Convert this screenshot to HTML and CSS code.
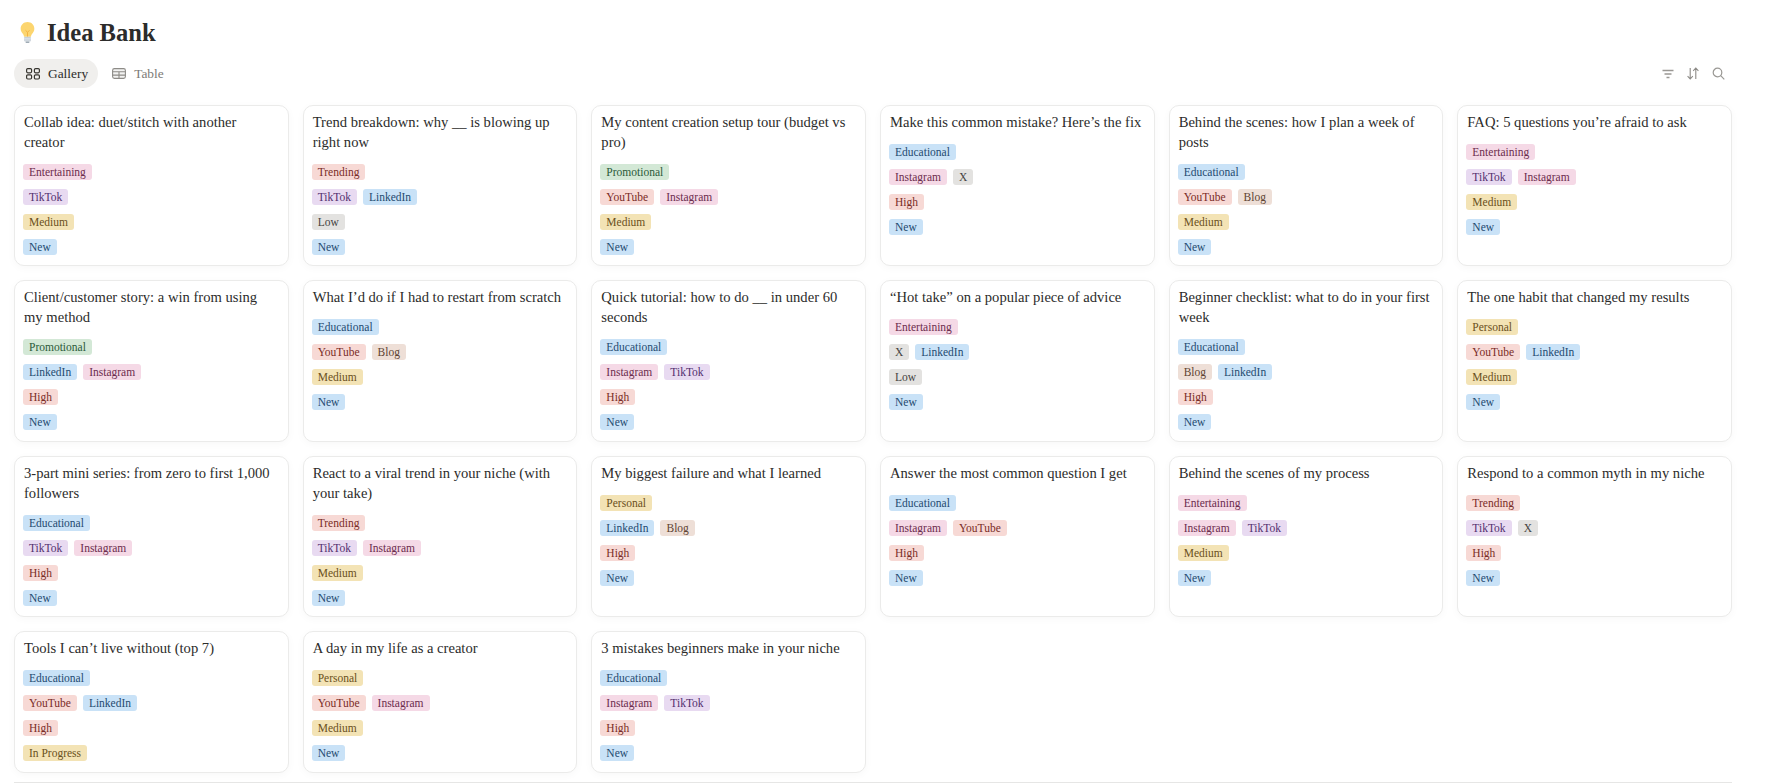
FILE: index.html
```html
<!DOCTYPE html>
<html lang="en">
<head>
  <meta charset="UTF-8">
  <meta name="viewport" content="width=device-width, initial-scale=1.0">
  <title>Idea Bank</title>
  <link rel="stylesheet" href="styles.css">
</head>
<body>
  <h1 class="page-title">
    <svg class="bulb" width="17" height="21" viewBox="3.500 1.500 15 21.500">
      <path d="M11 1.500c-4 0-7 3-7 6.800 0 2.600 1.300 4 2.400 5.500.7 1 .9 1.700 1 2.700h7.200c.1-1 .3-1.700 1-2.700 1.100-1.500 2.400-2.900 2.400-5.500 0-3.800-3-6.800-7-6.800z" fill="#fcd56f"/>
      <path d="M9 10l2 2 2-2M11 12v4.500" fill="none" stroke="#f3b23f" stroke-width="1"/>
      <rect x="7.500" y="16.500" width="7" height="5" rx="1.200" fill="#c3ccd4"/>
      <path d="M7.500 18.200h7M7.500 19.900h7" stroke="#e6ebef" stroke-width=".8"/>
      <rect x="9" y="21.500" width="4" height="1.500" rx=".7" fill="#9fabb5"/>
    </svg>
    <span>Idea Bank</span>
  </h1>

  <div class="toolbar">
    <div class="tabs">
      <div class="tab active">
        <svg width="14" height="12" viewBox="0 0 14 12" fill="none" stroke="#37352f" stroke-width="1.200">
          <rect x=".6" y=".6" width="5" height="4.200" rx="1.200"/>
          <rect x="8.400" y=".6" width="5" height="4.200" rx="1.200"/>
          <rect x=".6" y="6.800" width="5" height="4.200" rx="1.200"/>
          <rect x="8.400" y="6.800" width="5" height="4.200" rx="1.200"/>
        </svg>
        Gallery
      </div>
      <div class="tab">
        <svg width="14" height="11" viewBox="0 0 14 11" fill="none" stroke="#8d8b87" stroke-width="1.100">
          <rect x=".6" y=".6" width="12.800" height="9.800" rx="1.800" fill="#f3f3f2"/>
          <path d="M.6 3.800h12.800M.6 7.100h12.800M7 3.800v6.600"/>
        </svg>
        Table
      </div>
    </div>
    <div class="actions">
      <svg width="12" height="12" viewBox="0 0 12 12" fill="none" stroke="#9a9894" stroke-width="1.300">
        <path d="M.5 2.500h11M2.500 6h7M4.500 9.500h3"/>
      </svg>
      <svg width="12" height="13" viewBox="0 0 12 13" fill="none" stroke="#8d8b87" stroke-width="1.100">
        <path d="M3.200 1v11M.6 9.200l2.600 2.800 2.600-2.800M8.800 12V1M6.200 3.800L8.800 1l2.600 2.800"/>
      </svg>
      <svg width="13" height="13" viewBox="0 0 13 13" fill="none" stroke="#9a9894" stroke-width="1.200">
        <circle cx="5.500" cy="5.500" r="4.300"/>
        <path d="M8.700 8.700l3.600 3.600"/>
      </svg>
    </div>
  </div>

  <div class="gallery">
    <div class="card">
      <div class="card-title">Collab idea: duet/stitch with another creator</div>
      <div class="tag-row"><span class="tag pink">Entertaining</span></div>
      <div class="tag-row"><span class="tag purple">TikTok</span></div>
      <div class="tag-row"><span class="tag yellow">Medium</span></div>
      <div class="tag-row"><span class="tag blue">New</span></div>
    </div>
    <div class="card">
      <div class="card-title">Trend breakdown: why __ is blowing up right now</div>
      <div class="tag-row"><span class="tag red">Trending</span></div>
      <div class="tag-row"><span class="tag purple">TikTok</span><span class="tag blue">LinkedIn</span></div>
      <div class="tag-row"><span class="tag gray">Low</span></div>
      <div class="tag-row"><span class="tag blue">New</span></div>
    </div>
    <div class="card">
      <div class="card-title">My content creation setup tour (budget vs pro)</div>
      <div class="tag-row"><span class="tag green">Promotional</span></div>
      <div class="tag-row"><span class="tag red">YouTube</span><span class="tag pink">Instagram</span></div>
      <div class="tag-row"><span class="tag yellow">Medium</span></div>
      <div class="tag-row"><span class="tag blue">New</span></div>
    </div>
    <div class="card">
      <div class="card-title">Make this common mistake? Here’s the fix</div>
      <div class="tag-row"><span class="tag blue">Educational</span></div>
      <div class="tag-row"><span class="tag pink">Instagram</span><span class="tag gray">X</span></div>
      <div class="tag-row"><span class="tag red">High</span></div>
      <div class="tag-row"><span class="tag blue">New</span></div>
    </div>
    <div class="card">
      <div class="card-title">Behind the scenes: how I plan a week of posts</div>
      <div class="tag-row"><span class="tag blue">Educational</span></div>
      <div class="tag-row"><span class="tag red">YouTube</span><span class="tag brown">Blog</span></div>
      <div class="tag-row"><span class="tag yellow">Medium</span></div>
      <div class="tag-row"><span class="tag blue">New</span></div>
    </div>
    <div class="card">
      <div class="card-title">FAQ: 5 questions you’re afraid to ask</div>
      <div class="tag-row"><span class="tag pink">Entertaining</span></div>
      <div class="tag-row"><span class="tag purple">TikTok</span><span class="tag pink">Instagram</span></div>
      <div class="tag-row"><span class="tag yellow">Medium</span></div>
      <div class="tag-row"><span class="tag blue">New</span></div>
    </div>

    <div class="card">
      <div class="card-title">Client/customer story: a win from using my method</div>
      <div class="tag-row"><span class="tag green">Promotional</span></div>
      <div class="tag-row"><span class="tag blue">LinkedIn</span><span class="tag pink">Instagram</span></div>
      <div class="tag-row"><span class="tag red">High</span></div>
      <div class="tag-row"><span class="tag blue">New</span></div>
    </div>
    <div class="card">
      <div class="card-title">What I’d do if I had to restart from scratch</div>
      <div class="tag-row"><span class="tag blue">Educational</span></div>
      <div class="tag-row"><span class="tag red">YouTube</span><span class="tag brown">Blog</span></div>
      <div class="tag-row"><span class="tag yellow">Medium</span></div>
      <div class="tag-row"><span class="tag blue">New</span></div>
    </div>
    <div class="card">
      <div class="card-title">Quick tutorial: how to do __ in under 60 seconds</div>
      <div class="tag-row"><span class="tag blue">Educational</span></div>
      <div class="tag-row"><span class="tag pink">Instagram</span><span class="tag purple">TikTok</span></div>
      <div class="tag-row"><span class="tag red">High</span></div>
      <div class="tag-row"><span class="tag blue">New</span></div>
    </div>
    <div class="card">
      <div class="card-title">“Hot take” on a popular piece of advice</div>
      <div class="tag-row"><span class="tag pink">Entertaining</span></div>
      <div class="tag-row"><span class="tag gray">X</span><span class="tag blue">LinkedIn</span></div>
      <div class="tag-row"><span class="tag gray">Low</span></div>
      <div class="tag-row"><span class="tag blue">New</span></div>
    </div>
    <div class="card">
      <div class="card-title">Beginner checklist: what to do in your first week</div>
      <div class="tag-row"><span class="tag blue">Educational</span></div>
      <div class="tag-row"><span class="tag brown">Blog</span><span class="tag blue">LinkedIn</span></div>
      <div class="tag-row"><span class="tag red">High</span></div>
      <div class="tag-row"><span class="tag blue">New</span></div>
    </div>
    <div class="card">
      <div class="card-title">The one habit that changed my results</div>
      <div class="tag-row"><span class="tag yellow">Personal</span></div>
      <div class="tag-row"><span class="tag red">YouTube</span><span class="tag blue">LinkedIn</span></div>
      <div class="tag-row"><span class="tag yellow">Medium</span></div>
      <div class="tag-row"><span class="tag blue">New</span></div>
    </div>

    <div class="card">
      <div class="card-title">3-part mini series: from zero to first 1,000 followers</div>
      <div class="tag-row"><span class="tag blue">Educational</span></div>
      <div class="tag-row"><span class="tag purple">TikTok</span><span class="tag pink">Instagram</span></div>
      <div class="tag-row"><span class="tag red">High</span></div>
      <div class="tag-row"><span class="tag blue">New</span></div>
    </div>
    <div class="card">
      <div class="card-title">React to a viral trend in your niche (with your take)</div>
      <div class="tag-row"><span class="tag red">Trending</span></div>
      <div class="tag-row"><span class="tag purple">TikTok</span><span class="tag pink">Instagram</span></div>
      <div class="tag-row"><span class="tag yellow">Medium</span></div>
      <div class="tag-row"><span class="tag blue">New</span></div>
    </div>
    <div class="card">
      <div class="card-title">My biggest failure and what I learned</div>
      <div class="tag-row"><span class="tag yellow">Personal</span></div>
      <div class="tag-row"><span class="tag blue">LinkedIn</span><span class="tag brown">Blog</span></div>
      <div class="tag-row"><span class="tag red">High</span></div>
      <div class="tag-row"><span class="tag blue">New</span></div>
    </div>
    <div class="card">
      <div class="card-title">Answer the most common question I get</div>
      <div class="tag-row"><span class="tag blue">Educational</span></div>
      <div class="tag-row"><span class="tag pink">Instagram</span><span class="tag red">YouTube</span></div>
      <div class="tag-row"><span class="tag red">High</span></div>
      <div class="tag-row"><span class="tag blue">New</span></div>
    </div>
    <div class="card">
      <div class="card-title">Behind the scenes of my process</div>
      <div class="tag-row"><span class="tag pink">Entertaining</span></div>
      <div class="tag-row"><span class="tag pink">Instagram</span><span class="tag purple">TikTok</span></div>
      <div class="tag-row"><span class="tag yellow">Medium</span></div>
      <div class="tag-row"><span class="tag blue">New</span></div>
    </div>
    <div class="card">
      <div class="card-title">Respond to a common myth in my niche</div>
      <div class="tag-row"><span class="tag red">Trending</span></div>
      <div class="tag-row"><span class="tag purple">TikTok</span><span class="tag gray">X</span></div>
      <div class="tag-row"><span class="tag red">High</span></div>
      <div class="tag-row"><span class="tag blue">New</span></div>
    </div>

    <div class="card">
      <div class="card-title">Tools I can’t live without (top 7)</div>
      <div class="tag-row"><span class="tag blue">Educational</span></div>
      <div class="tag-row"><span class="tag red">YouTube</span><span class="tag blue">LinkedIn</span></div>
      <div class="tag-row"><span class="tag red">High</span></div>
      <div class="tag-row"><span class="tag yellow">In Progress</span></div>
    </div>
    <div class="card">
      <div class="card-title">A day in my life as a creator</div>
      <div class="tag-row"><span class="tag yellow">Personal</span></div>
      <div class="tag-row"><span class="tag red">YouTube</span><span class="tag pink">Instagram</span></div>
      <div class="tag-row"><span class="tag yellow">Medium</span></div>
      <div class="tag-row"><span class="tag blue">New</span></div>
    </div>
    <div class="card">
      <div class="card-title">3 mistakes beginners make in your niche</div>
      <div class="tag-row"><span class="tag blue">Educational</span></div>
      <div class="tag-row"><span class="tag pink">Instagram</span><span class="tag purple">TikTok</span></div>
      <div class="tag-row"><span class="tag red">High</span></div>
      <div class="tag-row"><span class="tag blue">New</span></div>
    </div>
  </div>
  <div class="bottom-line"></div>
</body>
</html>
```

FILE: styles.css
```css
body {
  margin: 0;
  padding: 0 37px 0 14px;
  background: #fff;
  color: #2c2c2b;
  font-family: "Liberation Serif", serif;
  overflow: hidden;
}
.page-title {
  display: flex;
  align-items: center;
  gap: 11px;
  height: 26px;
  margin: 0;
  padding: 20px 0 0 5px;
  font-size: 24.6px;
  line-height: 26px;
  font-weight: 700;
}
.bulb {
  flex: none;
  margin-bottom: 2px;
}
.toolbar {
  display: flex;
  align-items: center;
  justify-content: space-between;
  margin-top: 13px;
  height: 29px;
}
.tabs {
  display: flex;
  align-items: center;
}
.tab {
  display: flex;
  align-items: center;
  gap: 8px;
  height: 29px;
  padding: 0 10px 0 12px;
  border-radius: 15px;
  font-size: 13.4px;
  color: #7d7b77;
}
.tab.active {
  background: #f0efed;
  color: #2c2c2b;
}
.tab + .tab {
  margin-left: 2px;
}
.actions {
  display: flex;
  align-items: center;
  gap: 13px;
  padding-right: 7px;
}
.gallery {
  display: grid;
  grid-template-columns: repeat(6, 1fr);
  gap: 14px;
  margin-top: 16.5px;
}
.card {
  display: flex;
  flex-direction: column;
  gap: 9px;
  padding: 6px 10px 10.5px 9px;
  border: 1px solid #ebebea;
  border-radius: 10px;
  box-shadow: 0 2px 8px rgba(0,0,0,0.03);
  background: #fff;
}
.card-title {
  margin-bottom: 3px;
  font-size: 14.6px;
  line-height: 20px;
  color: #2c2c2b;
}
.tag-row {
  display: flex;
  gap: 6px;
  margin-left: -1px;
}
.tag {
  height: 16px;
  padding: 0 6px;
  border-radius: 3px;
  font-size: 11.5px;
  line-height: 16px;
}
.pink { background: #f5d9e6; color: #6c2c4d; }
.purple { background: #e8daf1; color: #53306f; }
.yellow { background: #f3e3b5; color: #6a5020; }
.blue { background: #c9e2f7; color: #1f4a70; }
.red { background: #f7d9d5; color: #7a2c26; }
.gray { background: #e3e2e0; color: #45433f; }
.green { background: #d3e8d6; color: #2b5a39; }
.brown { background: #eedfd7; color: #5e4332; }
.bottom-line {
  height: 1px;
  margin-top: 9.5px;
  background: #e6e6e5;
}
```
